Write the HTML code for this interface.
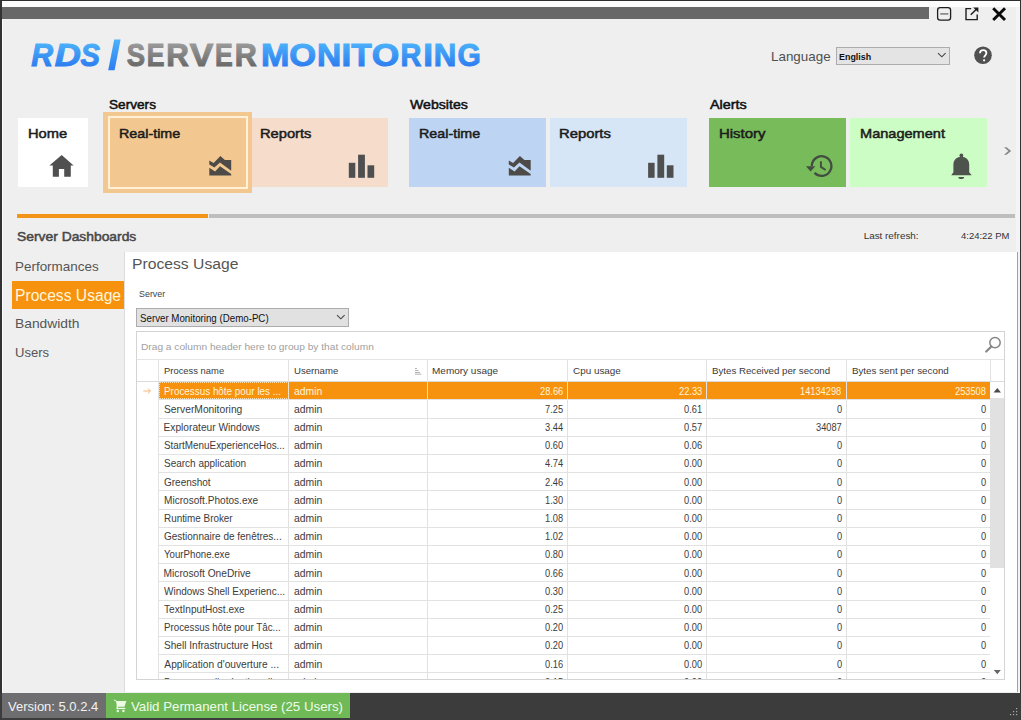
<!DOCTYPE html>
<html><head><meta charset="utf-8">
<style>
*{margin:0;padding:0;box-sizing:border-box}
html,body{width:1021px;height:720px;overflow:hidden;background:#efefef;font-family:"Liberation Sans",sans-serif}
.a{position:absolute}
.t{position:absolute;white-space:nowrap;line-height:1}

</style></head><body>
<div class="a" style="left:0px;top:0px;width:1021px;height:1px;background:#2e2e2e;"></div>
<div class="a" style="left:2px;top:1px;width:1017.5px;height:6px;background:#fdfdfd;"></div>
<div class="a" style="left:2px;top:7px;width:927px;height:11.5px;background:#686868;"></div>
<div class="a" style="left:1015.5px;top:7px;width:4px;height:686px;background:#f4f4f6;"></div>
<div class="a" style="left:0px;top:0px;width:2px;height:720px;background:#333;"></div>
<div class="a" style="left:1019.5px;top:0px;width:1.5px;height:720px;background:#333;"></div>
<div class="a" style="left:2px;top:18.5px;width:1px;height:674px;background:#fafafa;"></div>
<svg class="a" style="left:930px;top:2px" width="85" height="24" viewBox="930 2 85 24">
 <rect x="937.6" y="7.6" width="13" height="12.6" rx="2.6" fill="none" stroke="#1e1e1e" stroke-width="1.3"/>
 <line x1="940.2" y1="13.9" x2="948.4" y2="13.9" stroke="#7a7a7a" stroke-width="1.5"/>
 <path d="M971.2 8.6 H966 V19.6 H977.2 V14.4" fill="none" stroke="#1e1e1e" stroke-width="1.4"/>
 <path d="M970.8 14.8 L976.6 9" stroke="#1e1e1e" stroke-width="1.5"/>
 <path d="M973.2 7.4 H978.4 V12.6 Z" fill="#1e1e1e"/>
 <path d="M993.2 8.2 L1005 20 M1005 8.2 L993.2 20" stroke="#0a0a0a" stroke-width="2.9"/>
</svg>
<svg class="a" style="left:0;top:0" width="500" height="90" viewBox="0 0 500 90">
<defs>
<linearGradient id="gb" gradientUnits="userSpaceOnUse" x1="0" y1="-23.7" x2="0" y2="1.3"><stop offset="0" stop-color="#4db3fa"/><stop offset="1" stop-color="#2c7cef"/></linearGradient>
<linearGradient id="gg" gradientUnits="userSpaceOnUse" x1="0" y1="-23.7" x2="0" y2="1.3"><stop offset="0" stop-color="#9d9d9d"/><stop offset="1" stop-color="#686868"/></linearGradient>
<linearGradient id="gs" gradientUnits="userSpaceOnUse" x1="0" y1="39" x2="0" y2="71"><stop offset="0" stop-color="#4db3fa"/><stop offset="1" stop-color="#2c7cef"/></linearGradient>
</defs>
<text transform="translate(31.17 65.70) scale(0.9634 1)" font-family="Liberation Sans" font-weight="bold" font-style="italic" font-size="31.4" fill="url(#gb)" stroke="url(#gb)" stroke-width="1.0">R</text>
<text transform="translate(54.67 65.70) scale(1.1517 1)" font-family="Liberation Sans" font-weight="bold" font-style="italic" font-size="31.4" fill="url(#gb)" stroke="url(#gb)" stroke-width="1.0">D</text>
<text transform="translate(80.54 65.70) scale(0.9283 1)" font-family="Liberation Sans" font-weight="bold" font-style="italic" font-size="31.4" fill="url(#gb)" stroke="url(#gb)" stroke-width="1.0">S</text>
<path d="M114.2 39.4 L120.6 39.4 L114.6 70.3 L108.2 70.3 Z" fill="url(#gs)"/>
<text transform="translate(126.68 65.70) scale(0.8741 1)" font-family="Liberation Sans" font-weight="bold" font-size="31.4" fill="url(#gg)" stroke="url(#gg)" stroke-width="1.0">S</text>
<text transform="translate(146.70 65.70) scale(0.8474 1)" font-family="Liberation Sans" font-weight="bold" font-size="31.4" fill="url(#gg)" stroke="url(#gg)" stroke-width="1.0">E</text>
<text transform="translate(166.19 65.70) scale(0.9970 1)" font-family="Liberation Sans" font-weight="bold" font-size="31.4" fill="url(#gg)" stroke="url(#gg)" stroke-width="1.0">R</text>
<text transform="translate(189.84 65.70) scale(1.1226 1)" font-family="Liberation Sans" font-weight="bold" font-size="31.4" fill="url(#gg)" stroke="url(#gg)" stroke-width="1.0">V</text>
<text transform="translate(215.00 65.70) scale(0.8474 1)" font-family="Liberation Sans" font-weight="bold" font-size="31.4" fill="url(#gg)" stroke="url(#gg)" stroke-width="1.0">E</text>
<text transform="translate(234.64 65.70) scale(0.9718 1)" font-family="Liberation Sans" font-weight="bold" font-size="31.4" fill="url(#gg)" stroke="url(#gg)" stroke-width="1.0">R</text>
<text transform="translate(260.90 65.70) scale(1.0828 1)" font-family="Liberation Sans" font-weight="bold" font-size="31.4" fill="url(#gb)" stroke="url(#gb)" stroke-width="1.0">M</text>
<text transform="translate(289.32 65.70) scale(1.0998 1)" font-family="Liberation Sans" font-weight="bold" font-size="31.4" fill="url(#gb)" stroke="url(#gb)" stroke-width="1.0">O</text>
<text transform="translate(316.94 65.70) scale(1.0679 1)" font-family="Liberation Sans" font-weight="bold" font-size="31.4" fill="url(#gb)" stroke="url(#gb)" stroke-width="1.0">N</text>
<text transform="translate(341.53 65.70) scale(1.1174 1)" font-family="Liberation Sans" font-weight="bold" font-size="31.4" fill="url(#gb)" stroke="url(#gb)" stroke-width="1.0">I</text>
<text transform="translate(351.16 65.70) scale(1.0688 1)" font-family="Liberation Sans" font-weight="bold" font-size="31.4" fill="url(#gb)" stroke="url(#gb)" stroke-width="1.0">T</text>
<text transform="translate(371.68 65.70) scale(1.1273 1)" font-family="Liberation Sans" font-weight="bold" font-size="31.4" fill="url(#gb)" stroke="url(#gb)" stroke-width="1.0">O</text>
<text transform="translate(400.55 65.70) scale(0.9214 1)" font-family="Liberation Sans" font-weight="bold" font-size="31.4" fill="url(#gb)" stroke="url(#gb)" stroke-width="1.0">R</text>
<text transform="translate(423.33 65.70) scale(1.1174 1)" font-family="Liberation Sans" font-weight="bold" font-size="31.4" fill="url(#gb)" stroke="url(#gb)" stroke-width="1.0">I</text>
<text transform="translate(433.69 65.70) scale(0.9974 1)" font-family="Liberation Sans" font-weight="bold" font-size="31.4" fill="url(#gb)" stroke="url(#gb)" stroke-width="1.0">N</text>
<text transform="translate(457.50 65.70) scale(0.9531 1)" font-family="Liberation Sans" font-weight="bold" font-size="31.4" fill="url(#gb)" stroke="url(#gb)" stroke-width="1.0">G</text>
</svg>
<div class="t" style="left:771.2px;top:50.4px;font-size:13px;color:#505050;transform:scaleX(1.03);transform-origin:0 0;">Language</div>
<div class="a" style="left:835.5px;top:47.4px;width:114.5px;height:17.2px;background:#e4e4e4;border:1px solid #acacac"></div>
<div class="t" style="left:839.3px;top:51.84px;font-size:9.4px;color:#111;font-weight:bold;transform:scaleX(0.95);transform-origin:0 0;">English</div>
<svg class="a" style="left:937px;top:51px" width="10" height="8"><path d="M1 2.2 L4.8 5.8 L8.6 2.2" fill="none" stroke="#444" stroke-width="1.1"/></svg>
<svg class="a" style="left:973px;top:45px" width="20" height="20" viewBox="973 45 20 20"><circle cx="983" cy="55.2" r="8.8" fill="#505050"/>
<path d="M980 53.2 C980 51.3 981.4 50.2 983.2 50.2 C985.1 50.2 986.4 51.4 986.4 53 C986.4 55.2 984.1 55.4 984.1 57.6" fill="none" stroke="#fff" stroke-width="1.8"/>
<circle cx="984.1" cy="60.3" r="1.15" fill="#fff"/></svg>
<div class="t" style="left:109.09px;top:98.92px;font-size:12.5px;color:#111;transform:scaleX(1.09);transform-origin:0 0;-webkit-text-stroke:0.5px #111;">Servers</div>
<div class="t" style="left:409.63px;top:99.02px;font-size:12.5px;color:#111;transform:scaleX(1.13);transform-origin:0 0;-webkit-text-stroke:0.5px #111;">Websites</div>
<div class="t" style="left:709.66px;top:99.02px;font-size:12.5px;color:#111;transform:scaleX(1.15);transform-origin:0 0;-webkit-text-stroke:0.5px #111;">Alerts</div>
<div class="a" style="left:18px;top:118px;width:70px;height:69px;background:#fff;"></div>
<div class="a" style="left:248px;top:118px;width:139.8px;height:68.6px;background:#f5dccb;"></div>
<div class="a" style="left:103.4px;top:112px;width:148.6px;height:80.6px;background:#f3c890;"></div>
<div class="a" style="left:108px;top:116px;width:140px;height:73px;background:transparent;border:2px solid #fff0d6"></div>
<div class="a" style="left:409px;top:117.6px;width:136.8px;height:69px;background:#bdd5f2;"></div>
<div class="a" style="left:549.8px;top:117.6px;width:137.2px;height:69px;background:#d6e6f7;"></div>
<div class="a" style="left:708.9px;top:117.8px;width:136.9px;height:68.8px;background:#77bb5b;"></div>
<div class="a" style="left:850.1px;top:117.8px;width:137px;height:68.8px;background:#ccfdc5;"></div>
<div class="t" style="left:28.49px;top:126.6px;font-size:13px;color:#1c1c1c;transform:scaleX(1.13);transform-origin:0 0;-webkit-text-stroke:0.5px #1c1c1c;">Home</div>
<div class="t" style="left:118.92px;top:126.6px;font-size:13px;color:#1c1c1c;transform:scaleX(1.1);transform-origin:0 0;-webkit-text-stroke:0.5px #1c1c1c;">Real-time</div>
<div class="t" style="left:260.39px;top:126.6px;font-size:13px;color:#1c1c1c;transform:scaleX(1.13);transform-origin:0 0;-webkit-text-stroke:0.5px #1c1c1c;">Reports</div>
<div class="t" style="left:418.92px;top:126.6px;font-size:13px;color:#1c1c1c;transform:scaleX(1.1);transform-origin:0 0;-webkit-text-stroke:0.5px #1c1c1c;">Real-time</div>
<div class="t" style="left:559.48px;top:126.6px;font-size:13px;color:#1c1c1c;transform:scaleX(1.14);transform-origin:0 0;-webkit-text-stroke:0.5px #1c1c1c;">Reports</div>
<div class="t" style="left:718.57px;top:126.6px;font-size:13px;color:#1c1c1c;transform:scaleX(1.15);transform-origin:0 0;-webkit-text-stroke:0.5px #1c1c1c;">History</div>
<div class="t" style="left:859.6px;top:126.6px;font-size:13px;color:#1c1c1c;transform:scaleX(1.12);transform-origin:0 0;-webkit-text-stroke:0.5px #1c1c1c;">Management</div>
<svg class="a" style="left:0;top:140px" width="1021" height="45" viewBox="0 140 1021 45">
<path d="M61.7 155 L73.6 165.6 L70.8 165.6 L70.8 176.8 L64.2 176.8 L64.2 168.9 L58.9 168.9 L58.9 176.8 L52.8 176.8 L52.8 165.6 L49.4 165.6 Z" fill="#505050"/>
<g fill="#4d4a48">
<path d="M209.3 160.4 L213.6 162.9 L220.4 155.9 L224.9 160.1 L231.2 160.1 L231.2 170.7 L220 162.5 L214.4 167.6 L209.3 164.4 Z"/>
<path d="M209.3 167.7 L215.1 171.5 L220 166.2 L231.2 174.1 L231.2 175.6 L209.3 175.6 Z"/>
</g>
<g fill="#4d4a48" transform="translate(299.5 0)">
<path d="M209.3 160.4 L213.6 162.9 L220.4 155.9 L224.9 160.1 L231.2 160.1 L231.2 170.7 L220 162.5 L214.4 167.6 L209.3 164.4 Z"/>
<path d="M209.3 167.7 L215.1 171.5 L220 166.2 L231.2 174.1 L231.2 175.6 L209.3 175.6 Z"/>
</g>
<g fill="#4f4f4f">
<rect x="348.8" y="162.8" width="6.5" height="15"/>
<rect x="358.1" y="154.7" width="6.8" height="23.1"/>
<rect x="367.5" y="165.3" width="6.7" height="12.5"/>
</g>
<g fill="#4f4f4f" transform="translate(299.3 0)">
<rect x="348.8" y="162.8" width="6.5" height="15"/>
<rect x="358.1" y="154.7" width="6.8" height="23.1"/>
<rect x="367.5" y="165.3" width="6.7" height="12.5"/>
</g>
<g fill="none" stroke="#434c40" stroke-width="2.3">
<path d="M811.8 166 A9.8 9.8 0 1 1 814.6 172.9"/>
<path d="M820.9 161.3 V166.9 L825.6 170" stroke-width="1.9"/>
</g>
<path d="M806 166.2 L815.3 166.2 L810.6 171.5 Z" fill="#434c40"/>
<circle cx="961.4" cy="155.4" r="1.9" fill="#4d524c"/>
<path d="M953.4 172.2 V164.5 C953.4 159.8 957 156.8 961.4 156.8 C965.8 156.8 969.2 159.8 969.2 164.5 V172.2 L971.7 175.3 H951.2 Z" fill="#4f534e"/>
<path d="M958.3 177 A2.9 2.1 0 0 0 964.1 177 Z" fill="#4f534e"/>
<path d="M1004 147.2 L1006.6 147.2 L1011.2 151 L1006.6 154.8 L1004 154.8 L1008.3 151 Z" fill="#8a8a8a"/>
</svg>
<div class="a" style="left:17px;top:214.2px;width:190.5px;height:4px;background:#f39419;"></div>
<div class="a" style="left:209px;top:214.4px;width:806px;height:3.8px;background:#bebebe;"></div>
<div class="t" style="left:16.98px;top:230.03px;font-size:13.2px;color:#474747;transform:scaleX(1.05);transform-origin:0 0;-webkit-text-stroke:0.5px #474747;">Server Dashboards</div>
<div class="t" style="left:863.68px;top:230.72px;font-size:9.9px;color:#333;">Last refresh:</div>
<div class="t" style="left:960.79px;top:230.72px;font-size:9.9px;color:#333;transform:scaleX(0.96);transform-origin:0 0;">4:24:22 PM</div>
<div class="t" style="left:15.29px;top:260.66px;font-size:12.8px;color:#555;transform:scaleX(1.05);transform-origin:0 0;">Performances</div>
<div class="a" style="left:12.1px;top:280.7px;width:112.5px;height:28.1px;background:#f7920f;"></div>
<div class="t" style="left:15.12px;top:287.83px;font-size:15.8px;color:#fff6dc;transform:scaleX(0.99);transform-origin:0 0;">Process Usage</div>
<div class="t" style="left:15.26px;top:317.86px;font-size:12.8px;color:#555;transform:scaleX(1.08);transform-origin:0 0;">Bandwidth</div>
<div class="t" style="left:15.39px;top:346.86px;font-size:12.8px;color:#555;transform:scaleX(1.02);transform-origin:0 0;">Users</div>
<div class="a" style="left:124.4px;top:252px;width:893px;height:440px;background:#fff;"></div>
<div class="a" style="left:124.4px;top:252px;width:1px;height:440px;background:#dcdcdc;"></div>
<div class="a" style="left:1016.6px;top:252px;width:1px;height:440px;background:#a0a0a0;"></div>
<div class="t" style="left:131.91px;top:256.26px;font-size:15.4px;color:#555;transform:scaleX(1.02);transform-origin:0 0;">Process Usage</div>
<div class="t" style="left:139.2px;top:290.08px;font-size:9px;color:#444;transform:scaleX(0.99);transform-origin:0 0;">Server</div>
<div class="a" style="left:136.3px;top:308.3px;width:212.7px;height:18.3px;background:#e1e1e1;border:1px solid #acacac"></div>
<div class="t" style="left:139.86px;top:312.64px;font-size:10.7px;color:#111;transform:scaleX(0.91);transform-origin:0 0;">Server Monitoring (Demo-PC)</div>
<svg class="a" style="left:336px;top:313px" width="10" height="8"><path d="M1 2.2 L4.8 5.8 L8.6 2.2" fill="none" stroke="#444" stroke-width="1.1"/></svg>
<div class="a" style="left:136px;top:331.3px;width:869px;height:349.1px;background:#fff;border:1px solid #d4d4d4"></div>
<div class="a g" style="left:137px;top:332.3px;width:867px;height:347.09999999999997px;overflow:hidden">
<div class="a" style="left:-137px;top:-332.3px">
<div class="t" style="left:141.26px;top:341.86px;font-size:9.5px;color:#a0a0a0;transform:scaleX(1.07);transform-origin:0 0;">Drag a column header here to group by that column</div>
<svg class="a" style="left:983px;top:334px" width="20" height="22" viewBox="983 334 20 22"><circle cx="995" cy="342.6" r="5.2" fill="none" stroke="#858585" stroke-width="1.5"/><path d="M991.4 346.4 L986.2 351.6" stroke="#858585" stroke-width="2.1" stroke-linecap="round"/></svg>
<div class="a" style="left:136px;top:359.2px;width:869px;height:1px;background:#e4e4e4;"></div>
<div class="a" style="left:136px;top:380.7px;width:869px;height:1px;background:#dadada;"></div>
<div class="a" style="left:158.5px;top:381.7px;width:831.9px;height:17.7px;background:#f7920f;"></div>
<div class="a" style="left:158.5px;top:399.4px;width:831.9px;height:1px;background:#e2e2e2;"></div>
<div class="t" style="left:163.59px;top:386.67px;font-size:10.2px;color:#fff4d6;transform:scaleX(0.97);transform-origin:0 0;">Processus hôte pour les ...</div>
<div class="t" style="left:293.76px;top:386.67px;font-size:10.2px;color:#fff4d6;transform:scaleX(1.02);transform-origin:0 0;">admin</div>
<div class="t" style="left:539.67px;top:386.67px;font-size:10.2px;color:#fff4d6;transform:scaleX(0.91);transform-origin:0 0;">28.66</div>
<div class="t" style="left:678.97px;top:386.67px;font-size:10.2px;color:#fff4d6;transform:scaleX(0.91);transform-origin:0 0;">22.33</div>
<div class="t" style="left:800.41px;top:386.67px;font-size:10.2px;color:#fff4d6;transform:scaleX(0.91);transform-origin:0 0;">14134298</div>
<div class="t" style="left:954.84px;top:386.67px;font-size:10.2px;color:#fff4d6;transform:scaleX(0.91);transform-origin:0 0;">253508</div>
<div class="a" style="left:158.5px;top:417.6px;width:831.9px;height:1px;background:#e2e2e2;"></div>
<div class="t" style="left:163.94px;top:404.87px;font-size:10.2px;color:#3c3c3c;transform:scaleX(1.01);transform-origin:0 0;">ServerMonitoring</div>
<div class="t" style="left:293.76px;top:404.87px;font-size:10.2px;color:#3c3c3c;transform:scaleX(1.02);transform-origin:0 0;">admin</div>
<div class="t" style="left:544.82px;top:404.87px;font-size:10.2px;color:#3c3c3c;transform:scaleX(0.91);transform-origin:0 0;">7.25</div>
<div class="t" style="left:684.19px;top:404.87px;font-size:10.2px;color:#3c3c3c;transform:scaleX(0.91);transform-origin:0 0;">0.61</div>
<div class="t" style="left:836.5px;top:404.87px;font-size:10.2px;color:#3c3c3c;transform:scaleX(0.91);transform-origin:0 0;">0</div>
<div class="t" style="left:980.6px;top:404.87px;font-size:10.2px;color:#3c3c3c;transform:scaleX(0.91);transform-origin:0 0;">0</div>
<div class="a" style="left:158.5px;top:435.8px;width:831.9px;height:1px;background:#e2e2e2;"></div>
<div class="t" style="left:163.55px;top:423.07px;font-size:10.2px;color:#3c3c3c;transform:scaleX(1);transform-origin:0 0;">Explorateur Windows</div>
<div class="t" style="left:293.76px;top:423.07px;font-size:10.2px;color:#3c3c3c;transform:scaleX(1.02);transform-origin:0 0;">admin</div>
<div class="t" style="left:544.7px;top:423.07px;font-size:10.2px;color:#3c3c3c;transform:scaleX(0.91);transform-origin:0 0;">3.44</div>
<div class="t" style="left:684.21px;top:423.07px;font-size:10.2px;color:#3c3c3c;transform:scaleX(0.91);transform-origin:0 0;">0.57</div>
<div class="t" style="left:815.96px;top:423.07px;font-size:10.2px;color:#3c3c3c;transform:scaleX(0.91);transform-origin:0 0;">34087</div>
<div class="t" style="left:980.6px;top:423.07px;font-size:10.2px;color:#3c3c3c;transform:scaleX(0.91);transform-origin:0 0;">0</div>
<div class="a" style="left:158.5px;top:454px;width:831.9px;height:1px;background:#e2e2e2;"></div>
<div class="t" style="left:163.95px;top:441.27px;font-size:10.2px;color:#3c3c3c;transform:scaleX(0.97);transform-origin:0 0;">StartMenuExperienceHos...</div>
<div class="t" style="left:293.76px;top:441.27px;font-size:10.2px;color:#3c3c3c;transform:scaleX(1.02);transform-origin:0 0;">admin</div>
<div class="t" style="left:544.79px;top:441.27px;font-size:10.2px;color:#3c3c3c;transform:scaleX(0.91);transform-origin:0 0;">0.60</div>
<div class="t" style="left:684.14px;top:441.27px;font-size:10.2px;color:#3c3c3c;transform:scaleX(0.91);transform-origin:0 0;">0.06</div>
<div class="t" style="left:836.5px;top:441.27px;font-size:10.2px;color:#3c3c3c;transform:scaleX(0.91);transform-origin:0 0;">0</div>
<div class="t" style="left:980.6px;top:441.27px;font-size:10.2px;color:#3c3c3c;transform:scaleX(0.91);transform-origin:0 0;">0</div>
<div class="a" style="left:158.5px;top:472.2px;width:831.9px;height:1px;background:#e2e2e2;"></div>
<div class="t" style="left:163.95px;top:459.47px;font-size:10.2px;color:#3c3c3c;transform:scaleX(0.98);transform-origin:0 0;">Search application</div>
<div class="t" style="left:293.76px;top:459.47px;font-size:10.2px;color:#3c3c3c;transform:scaleX(1.02);transform-origin:0 0;">admin</div>
<div class="t" style="left:544.7px;top:459.47px;font-size:10.2px;color:#3c3c3c;transform:scaleX(0.91);transform-origin:0 0;">4.74</div>
<div class="t" style="left:684.09px;top:459.47px;font-size:10.2px;color:#3c3c3c;transform:scaleX(0.91);transform-origin:0 0;">0.00</div>
<div class="t" style="left:836.5px;top:459.47px;font-size:10.2px;color:#3c3c3c;transform:scaleX(0.91);transform-origin:0 0;">0</div>
<div class="t" style="left:980.6px;top:459.47px;font-size:10.2px;color:#3c3c3c;transform:scaleX(0.91);transform-origin:0 0;">0</div>
<div class="a" style="left:158.5px;top:490.4px;width:831.9px;height:1px;background:#e2e2e2;"></div>
<div class="t" style="left:163.9px;top:477.67px;font-size:10.2px;color:#3c3c3c;transform:scaleX(0.98);transform-origin:0 0;">Greenshot</div>
<div class="t" style="left:293.76px;top:477.67px;font-size:10.2px;color:#3c3c3c;transform:scaleX(1.02);transform-origin:0 0;">admin</div>
<div class="t" style="left:544.84px;top:477.67px;font-size:10.2px;color:#3c3c3c;transform:scaleX(0.91);transform-origin:0 0;">2.46</div>
<div class="t" style="left:684.09px;top:477.67px;font-size:10.2px;color:#3c3c3c;transform:scaleX(0.91);transform-origin:0 0;">0.00</div>
<div class="t" style="left:836.5px;top:477.67px;font-size:10.2px;color:#3c3c3c;transform:scaleX(0.91);transform-origin:0 0;">0</div>
<div class="t" style="left:980.6px;top:477.67px;font-size:10.2px;color:#3c3c3c;transform:scaleX(0.91);transform-origin:0 0;">0</div>
<div class="a" style="left:158.5px;top:508.6px;width:831.9px;height:1px;background:#e2e2e2;"></div>
<div class="t" style="left:163.56px;top:495.87px;font-size:10.2px;color:#3c3c3c;transform:scaleX(0.99);transform-origin:0 0;">Microsoft.Photos.exe</div>
<div class="t" style="left:293.76px;top:495.87px;font-size:10.2px;color:#3c3c3c;transform:scaleX(1.02);transform-origin:0 0;">admin</div>
<div class="t" style="left:544.79px;top:495.87px;font-size:10.2px;color:#3c3c3c;transform:scaleX(0.91);transform-origin:0 0;">1.30</div>
<div class="t" style="left:684.09px;top:495.87px;font-size:10.2px;color:#3c3c3c;transform:scaleX(0.91);transform-origin:0 0;">0.00</div>
<div class="t" style="left:836.5px;top:495.87px;font-size:10.2px;color:#3c3c3c;transform:scaleX(0.91);transform-origin:0 0;">0</div>
<div class="t" style="left:980.6px;top:495.87px;font-size:10.2px;color:#3c3c3c;transform:scaleX(0.91);transform-origin:0 0;">0</div>
<div class="a" style="left:158.5px;top:526.8px;width:831.9px;height:1px;background:#e2e2e2;"></div>
<div class="t" style="left:163.58px;top:514.07px;font-size:10.2px;color:#3c3c3c;transform:scaleX(0.97);transform-origin:0 0;">Runtime Broker</div>
<div class="t" style="left:293.76px;top:514.07px;font-size:10.2px;color:#3c3c3c;transform:scaleX(1.02);transform-origin:0 0;">admin</div>
<div class="t" style="left:544.84px;top:514.07px;font-size:10.2px;color:#3c3c3c;transform:scaleX(0.91);transform-origin:0 0;">1.08</div>
<div class="t" style="left:684.09px;top:514.07px;font-size:10.2px;color:#3c3c3c;transform:scaleX(0.91);transform-origin:0 0;">0.00</div>
<div class="t" style="left:836.5px;top:514.07px;font-size:10.2px;color:#3c3c3c;transform:scaleX(0.91);transform-origin:0 0;">0</div>
<div class="t" style="left:980.6px;top:514.07px;font-size:10.2px;color:#3c3c3c;transform:scaleX(0.91);transform-origin:0 0;">0</div>
<div class="a" style="left:158.5px;top:545px;width:831.9px;height:1px;background:#e2e2e2;"></div>
<div class="t" style="left:163.9px;top:532.27px;font-size:10.2px;color:#3c3c3c;transform:scaleX(0.98);transform-origin:0 0;">Gestionnaire de fenêtres...</div>
<div class="t" style="left:293.76px;top:532.27px;font-size:10.2px;color:#3c3c3c;transform:scaleX(1.02);transform-origin:0 0;">admin</div>
<div class="t" style="left:544.91px;top:532.27px;font-size:10.2px;color:#3c3c3c;transform:scaleX(0.91);transform-origin:0 0;">1.02</div>
<div class="t" style="left:684.09px;top:532.27px;font-size:10.2px;color:#3c3c3c;transform:scaleX(0.91);transform-origin:0 0;">0.00</div>
<div class="t" style="left:836.5px;top:532.27px;font-size:10.2px;color:#3c3c3c;transform:scaleX(0.91);transform-origin:0 0;">0</div>
<div class="t" style="left:980.6px;top:532.27px;font-size:10.2px;color:#3c3c3c;transform:scaleX(0.91);transform-origin:0 0;">0</div>
<div class="a" style="left:158.5px;top:563.2px;width:831.9px;height:1px;background:#e2e2e2;"></div>
<div class="t" style="left:164.18px;top:550.47px;font-size:10.2px;color:#3c3c3c;transform:scaleX(0.95);transform-origin:0 0;">YourPhone.exe</div>
<div class="t" style="left:293.76px;top:550.47px;font-size:10.2px;color:#3c3c3c;transform:scaleX(1.02);transform-origin:0 0;">admin</div>
<div class="t" style="left:544.79px;top:550.47px;font-size:10.2px;color:#3c3c3c;transform:scaleX(0.91);transform-origin:0 0;">0.80</div>
<div class="t" style="left:684.09px;top:550.47px;font-size:10.2px;color:#3c3c3c;transform:scaleX(0.91);transform-origin:0 0;">0.00</div>
<div class="t" style="left:836.5px;top:550.47px;font-size:10.2px;color:#3c3c3c;transform:scaleX(0.91);transform-origin:0 0;">0</div>
<div class="t" style="left:980.6px;top:550.47px;font-size:10.2px;color:#3c3c3c;transform:scaleX(0.91);transform-origin:0 0;">0</div>
<div class="a" style="left:158.5px;top:581.4px;width:831.9px;height:1px;background:#e2e2e2;"></div>
<div class="t" style="left:163.56px;top:568.67px;font-size:10.2px;color:#3c3c3c;">Microsoft OneDrive</div>
<div class="t" style="left:293.76px;top:568.67px;font-size:10.2px;color:#3c3c3c;transform:scaleX(1.02);transform-origin:0 0;">admin</div>
<div class="t" style="left:544.84px;top:568.67px;font-size:10.2px;color:#3c3c3c;transform:scaleX(0.91);transform-origin:0 0;">0.66</div>
<div class="t" style="left:684.09px;top:568.67px;font-size:10.2px;color:#3c3c3c;transform:scaleX(0.91);transform-origin:0 0;">0.00</div>
<div class="t" style="left:836.5px;top:568.67px;font-size:10.2px;color:#3c3c3c;transform:scaleX(0.91);transform-origin:0 0;">0</div>
<div class="t" style="left:980.6px;top:568.67px;font-size:10.2px;color:#3c3c3c;transform:scaleX(0.91);transform-origin:0 0;">0</div>
<div class="a" style="left:158.5px;top:599.6px;width:831.9px;height:1px;background:#e2e2e2;"></div>
<div class="t" style="left:164.35px;top:586.87px;font-size:10.2px;color:#3c3c3c;transform:scaleX(0.98);transform-origin:0 0;">Windows Shell Experienc...</div>
<div class="t" style="left:293.76px;top:586.87px;font-size:10.2px;color:#3c3c3c;transform:scaleX(1.02);transform-origin:0 0;">admin</div>
<div class="t" style="left:544.79px;top:586.87px;font-size:10.2px;color:#3c3c3c;transform:scaleX(0.91);transform-origin:0 0;">0.30</div>
<div class="t" style="left:684.09px;top:586.87px;font-size:10.2px;color:#3c3c3c;transform:scaleX(0.91);transform-origin:0 0;">0.00</div>
<div class="t" style="left:836.5px;top:586.87px;font-size:10.2px;color:#3c3c3c;transform:scaleX(0.91);transform-origin:0 0;">0</div>
<div class="t" style="left:980.6px;top:586.87px;font-size:10.2px;color:#3c3c3c;transform:scaleX(0.91);transform-origin:0 0;">0</div>
<div class="a" style="left:158.5px;top:617.8px;width:831.9px;height:1px;background:#e2e2e2;"></div>
<div class="t" style="left:164.17px;top:605.07px;font-size:10.2px;color:#3c3c3c;transform:scaleX(0.99);transform-origin:0 0;">TextInputHost.exe</div>
<div class="t" style="left:293.76px;top:605.07px;font-size:10.2px;color:#3c3c3c;transform:scaleX(1.02);transform-origin:0 0;">admin</div>
<div class="t" style="left:544.82px;top:605.07px;font-size:10.2px;color:#3c3c3c;transform:scaleX(0.91);transform-origin:0 0;">0.25</div>
<div class="t" style="left:684.09px;top:605.07px;font-size:10.2px;color:#3c3c3c;transform:scaleX(0.91);transform-origin:0 0;">0.00</div>
<div class="t" style="left:836.5px;top:605.07px;font-size:10.2px;color:#3c3c3c;transform:scaleX(0.91);transform-origin:0 0;">0</div>
<div class="t" style="left:980.6px;top:605.07px;font-size:10.2px;color:#3c3c3c;transform:scaleX(0.91);transform-origin:0 0;">0</div>
<div class="a" style="left:158.5px;top:636px;width:831.9px;height:1px;background:#e2e2e2;"></div>
<div class="t" style="left:163.59px;top:623.27px;font-size:10.2px;color:#3c3c3c;transform:scaleX(0.96);transform-origin:0 0;">Processus hôte pour Tâc...</div>
<div class="t" style="left:293.76px;top:623.27px;font-size:10.2px;color:#3c3c3c;transform:scaleX(1.02);transform-origin:0 0;">admin</div>
<div class="t" style="left:544.79px;top:623.27px;font-size:10.2px;color:#3c3c3c;transform:scaleX(0.91);transform-origin:0 0;">0.20</div>
<div class="t" style="left:684.09px;top:623.27px;font-size:10.2px;color:#3c3c3c;transform:scaleX(0.91);transform-origin:0 0;">0.00</div>
<div class="t" style="left:836.5px;top:623.27px;font-size:10.2px;color:#3c3c3c;transform:scaleX(0.91);transform-origin:0 0;">0</div>
<div class="t" style="left:980.6px;top:623.27px;font-size:10.2px;color:#3c3c3c;transform:scaleX(0.91);transform-origin:0 0;">0</div>
<div class="a" style="left:158.5px;top:654.2px;width:831.9px;height:1px;background:#e2e2e2;"></div>
<div class="t" style="left:163.95px;top:641.47px;font-size:10.2px;color:#3c3c3c;transform:scaleX(0.99);transform-origin:0 0;">Shell Infrastructure Host</div>
<div class="t" style="left:293.76px;top:641.47px;font-size:10.2px;color:#3c3c3c;transform:scaleX(1.02);transform-origin:0 0;">admin</div>
<div class="t" style="left:544.79px;top:641.47px;font-size:10.2px;color:#3c3c3c;transform:scaleX(0.91);transform-origin:0 0;">0.20</div>
<div class="t" style="left:684.09px;top:641.47px;font-size:10.2px;color:#3c3c3c;transform:scaleX(0.91);transform-origin:0 0;">0.00</div>
<div class="t" style="left:836.5px;top:641.47px;font-size:10.2px;color:#3c3c3c;transform:scaleX(0.91);transform-origin:0 0;">0</div>
<div class="t" style="left:980.6px;top:641.47px;font-size:10.2px;color:#3c3c3c;transform:scaleX(0.91);transform-origin:0 0;">0</div>
<div class="a" style="left:158.5px;top:672.4px;width:831.9px;height:1px;background:#e2e2e2;"></div>
<div class="t" style="left:164.37px;top:659.67px;font-size:10.2px;color:#3c3c3c;">Application d'ouverture ...</div>
<div class="t" style="left:293.76px;top:659.67px;font-size:10.2px;color:#3c3c3c;transform:scaleX(1.02);transform-origin:0 0;">admin</div>
<div class="t" style="left:544.84px;top:659.67px;font-size:10.2px;color:#3c3c3c;transform:scaleX(0.91);transform-origin:0 0;">0.16</div>
<div class="t" style="left:684.09px;top:659.67px;font-size:10.2px;color:#3c3c3c;transform:scaleX(0.91);transform-origin:0 0;">0.00</div>
<div class="t" style="left:836.5px;top:659.67px;font-size:10.2px;color:#3c3c3c;transform:scaleX(0.91);transform-origin:0 0;">0</div>
<div class="t" style="left:980.6px;top:659.67px;font-size:10.2px;color:#3c3c3c;transform:scaleX(0.91);transform-origin:0 0;">0</div>
<div class="a" style="left:158.5px;top:690.6px;width:831.9px;height:1px;background:#e2e2e2;"></div>
<div class="t" style="left:163.6px;top:677.87px;font-size:10.2px;color:#3c3c3c;transform:scaleX(0.95);transform-origin:0 0;">Processus d'exécution cli...</div>
<div class="t" style="left:293.76px;top:677.87px;font-size:10.2px;color:#3c3c3c;transform:scaleX(1.02);transform-origin:0 0;">admin</div>
<div class="t" style="left:544.82px;top:677.87px;font-size:10.2px;color:#3c3c3c;transform:scaleX(0.91);transform-origin:0 0;">0.15</div>
<div class="t" style="left:684.09px;top:677.87px;font-size:10.2px;color:#3c3c3c;transform:scaleX(0.91);transform-origin:0 0;">0.00</div>
<div class="t" style="left:836.5px;top:677.87px;font-size:10.2px;color:#3c3c3c;transform:scaleX(0.91);transform-origin:0 0;">0</div>
<div class="t" style="left:980.6px;top:677.87px;font-size:10.2px;color:#3c3c3c;transform:scaleX(0.91);transform-origin:0 0;">0</div>
<div class="a" style="left:158px;top:359.2px;width:1px;height:321.2px;background:#e2e2e2;"></div>
<div class="a" style="left:288px;top:359.2px;width:1px;height:321.2px;background:#e2e2e2;"></div>
<div class="a" style="left:427px;top:359.2px;width:1px;height:321.2px;background:#e2e2e2;"></div>
<div class="a" style="left:567px;top:359.2px;width:1px;height:321.2px;background:#e2e2e2;"></div>
<div class="a" style="left:706.3px;top:359.2px;width:1px;height:321.2px;background:#e2e2e2;"></div>
<div class="a" style="left:845.8px;top:359.2px;width:1px;height:321.2px;background:#e2e2e2;"></div>
<div class="a" style="left:989.9px;top:359.2px;width:1px;height:321.2px;background:#e2e2e2;"></div>
<div class="t" style="left:163.63px;top:365.9px;font-size:9.8px;color:#3a3a3a;transform:scaleX(0.96);transform-origin:0 0;">Process name</div>
<div class="t" style="left:293.95px;top:365.9px;font-size:9.8px;color:#3a3a3a;transform:scaleX(0.98);transform-origin:0 0;">Username</div>
<div class="t" style="left:432.38px;top:365.9px;font-size:9.8px;color:#3a3a3a;transform:scaleX(1.02);transform-origin:0 0;">Memory usage</div>
<div class="t" style="left:573px;top:365.9px;font-size:9.8px;color:#3a3a3a;transform:scaleX(1.01);transform-origin:0 0;">Cpu usage</div>
<div class="t" style="left:711.6px;top:365.9px;font-size:9.8px;color:#3a3a3a;transform:scaleX(0.99);transform-origin:0 0;">Bytes Received per second</div>
<div class="t" style="left:851.89px;top:365.9px;font-size:9.8px;color:#3a3a3a;">Bytes sent per second</div>
<svg class="a" style="left:414px;top:367px" width="10" height="9" viewBox="414 367 10 9"><path d="M415 368.5h2M415 370.5h3.6M415 372.5h5M415 374.2h6.4" stroke="#a8a8a8" stroke-width="0.9"/></svg>
<svg class="a" style="left:141px;top:386px" width="12" height="9" viewBox="141 386 12 9"><path d="M143.3 391H150.4M147.9 388.4L150.5 391L147.9 393.6" fill="none" stroke="#f3b06a" stroke-width="0.9"/></svg>
<div class="a" style="left:158.5px;top:381.7px;width:130px;height:17.7px;background:transparent;border:1px dotted #ffe2a8"></div>
<div class="a" style="left:990.4px;top:381.7px;width:13.6px;height:298.7px;background:#fff;"></div>
<div class="a" style="left:990.4px;top:397.6px;width:13.6px;height:170.2px;background:#e1e1e1;"></div>
<svg class="a" style="left:992px;top:386px" width="11" height="8" viewBox="992 386 11 8"><path d="M993.6 392.6L997.3 388L1001 392.6Z" fill="#4a4a4a"/></svg>
<svg class="a" style="left:992px;top:668px" width="11" height="8" viewBox="992 668 11 8"><path d="M993.8 670L997.3 674.2L1000.8 670Z" fill="#666"/></svg>
</div></div>
<div class="a" style="left:0px;top:692.6px;width:1021px;height:27.4px;background:#3c3c3c;"></div>
<div class="a" style="left:2px;top:692.8px;width:104px;height:25.6px;background:#6e6e70;"></div>
<div class="a" style="left:106px;top:692.8px;width:243.8px;height:25.6px;background:#70b957;"></div>
<div class="t" style="left:8.14px;top:700.06px;font-size:13.4px;color:#f2f2f2;transform:scaleX(0.97);transform-origin:0 0;">Version: 5.0.2.4</div>
<div class="t" style="left:131.33px;top:700.06px;font-size:13.4px;color:#eefce8;transform:scaleX(0.99);transform-origin:0 0;">Valid Permanent License (25 Users)</div>
<svg class="a" style="left:112px;top:697px" width="16" height="16" viewBox="112 697 16 16"><g fill="#ecfce4"><path d="M113.6 700.1 L114.2 699.6 L117 701 L116.6 702 Z"/><path d="M116 701 H126.4 L124.4 706.8 H117.6 Z"/><rect x="116.6" y="701.6" width="1.3" height="7.4"/><rect x="116.6" y="707.8" width="8.8" height="1.3"/><circle cx="117.8" cy="711" r="1.2"/><circle cx="123.4" cy="711" r="1.2"/></g></svg>
<svg class="a" style="left:1005px;top:705px" width="14" height="14" viewBox="1005 705 14 14"><g fill="#a8a8a8"><rect x="1016" y="708" width="1.2" height="1.2"/><rect x="1013" y="711" width="1.2" height="1.2"/><rect x="1016" y="711" width="1.2" height="1.2"/><rect x="1010" y="714" width="1.2" height="1.2"/><rect x="1013" y="714" width="1.2" height="1.2"/><rect x="1016" y="714" width="1.2" height="1.2"/></g></svg>
</body></html>
